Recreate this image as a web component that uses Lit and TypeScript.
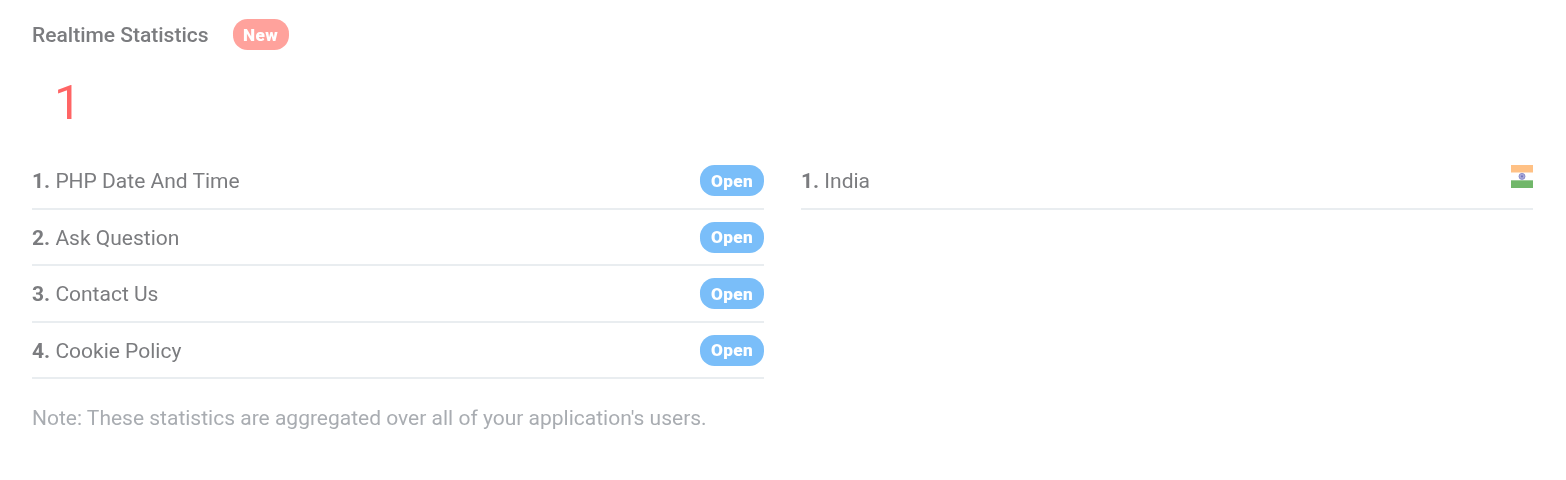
import { LitElement, html, css, svg } from "lit";
import { customElement } from "lit/decorators.js";

const pages = ["PHP Date And Time", "Ask Question", "Contact Us", "Cookie Policy"];
const spokes = Array.from({ length: 12 }, (_, i) => i * 15);

@customElement("app-root")
export class AppRoot extends LitElement {
  static styles = css`
    :host {
      display: block;
      box-sizing: border-box;
      height: 480px;
      padding: 19px 33px 0 32px;
      color: #7a7b7e;
      font: 400 21px/31px Roboto, sans-serif;
      opacity: 0.99;
      will-change: opacity;
    }
    header { display: flex; align-items: center; gap: 24px; height: 31px; }
    h1 { margin: 0; padding-top: 1px; font-size: 21px; line-height: 31px; font-weight: 500; }
    .badge {
      box-sizing: border-box;
      height: 31px;
      border-radius: 14.5px;
      padding-top: 0.8px;
      color: #fff;
      text-align: center;
      font-size: 17.2px;
      font-weight: 900;
      line-height: 31.6px;
      letter-spacing: 0.4px;
    }
    .new { width: 56px; background: #ffa19b; }
    .open { width: 64px; background: #79bef9; }
    .count {
      margin: 25px 0 0 22px;
      height: 56px;
      color: #ff6464;
      font-size: 49px;
      line-height: 56px;
    }
    .columns { display: grid; grid-template-columns: 732px 732px; gap: 37px; margin-top: 34.2px; }
    ul { margin: 0; padding: 0; list-style: none; }
    li {
      display: flex;
      justify-content: space-between;
      box-sizing: border-box;
      height: 56.45px;
      border-bottom: 2px solid #e9edf0;
    }
    li:first-child { height: 44.7px; }
    li + li { padding-top: 11.75px; }
    .label { line-height: 32px; }
    b { font-weight: 700; }
    svg { display: block; width: 22px; height: 23px; }
    footer { margin-top: 24px; color: #a8acb1; }
  `;

  render() {
    return html`
      <header><h1>Realtime Statistics</h1><span class="badge new">New</span></header>
      <div class="count">1</div>
      <main class="columns">
        <ul>
          ${pages.map((p, i) => html`<li><span class="label"><b>${i + 1}.</b> ${p}</span><span class="badge open">Open</span></li>`)}
        </ul>
        <ul>
          <li>
            <span class="label"><b>1.</b> India</span>
            <svg viewBox="0 0 22 23">
              <rect width="22" height="7.5" fill="#ffc184" />
              <rect y="15.3" width="22" height="7.7" fill="#70b769" />
              <g stroke="#7c7cc2" fill="#c4c4e6">
                <circle cx="11" cy="11.4" r="3" stroke-width=".8" />
                ${spokes.map((a) => svg`<path d="M8 11.4H14" stroke-width=".2" transform="rotate(${a} 11 11.4)" />`)}
              </g>
              <circle cx="11" cy="11.4" r=".8" fill="#7070b8" />
            </svg>
          </li>
        </ul>
      </main>
      <footer>Note: These statistics are aggregated over all of your application's users.</footer>
    `;
  }
}
